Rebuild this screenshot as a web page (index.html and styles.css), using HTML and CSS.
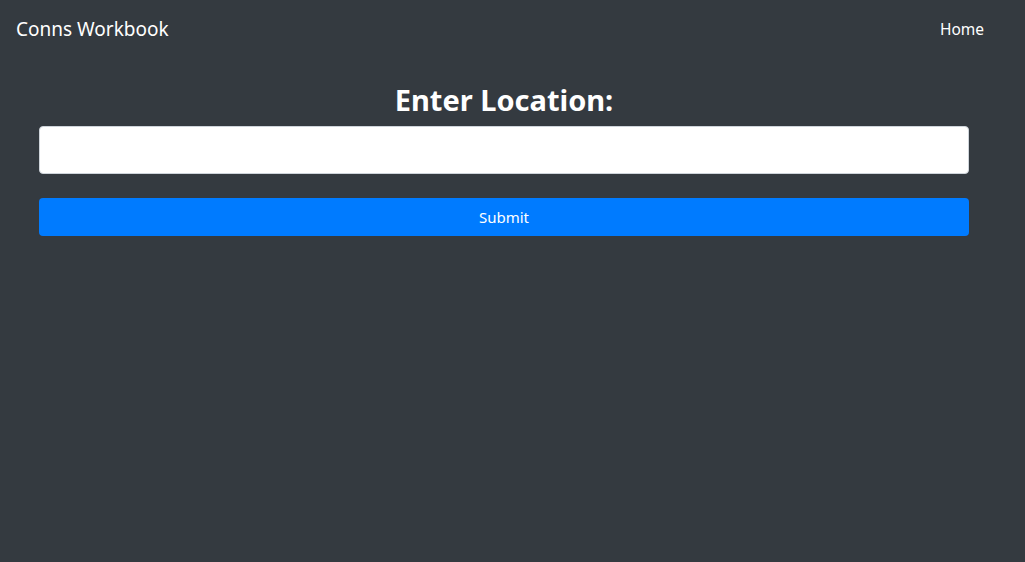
FILE: index.html
```html
<!DOCTYPE html>
<html lang="en">
<head>
<meta charset="utf-8">
<title>Conns Workbook</title>
<link rel="stylesheet" href="styles.css">
</head>
<body>
<div class="page">
  <nav class="navbar">
    <a class="brand" href="#">Conns Workbook</a>
    <a class="nav-link" href="#">Home</a>
  </nav>
  <main class="container">
    <h2 class="title">Enter Location:</h2>
    <form class="form">
      <input class="field" type="text" aria-label="Location">
      <button class="submit" type="button">Submit</button>
    </form>
  </main>
</div>
</body>
</html>
```

FILE: styles.css
```css
html, body {
  margin: 0;
  padding: 0;
  background: #343a40;
  height: 100%;
}
body {
  font-family: "Noto Sans", "Open Sans", sans-serif;
  color: #fff;
}
.page {
  width: 1008px;
}
.navbar {
  display: flex;
  align-items: center;
  justify-content: space-between;
  padding: 9px 16px 7px;
  height: 40px;
}
.brand {
  color: #fff;
  text-decoration: none;
  font-size: 19px;
  line-height: 30px;
}
.nav-link {
  color: #fff;
  text-decoration: none;
  font-size: 15.5px;
  padding: 8px;
}
.container {
  width: 930px;
  margin: 0 auto;
  padding-top: 25px;
}
.title {
  margin: 0 0 8px;
  text-align: center;
  font-size: 29px;
  font-weight: 700;
  line-height: 37px;
}
.form {
  display: flex;
  flex-direction: column;
  gap: 24px;
}
.field {
  box-sizing: border-box;
  height: 48px;
  width: 100%;
  border: 1px solid #ced4da;
  border-radius: 4px;
  background: #fff;
  font-size: 20px;
  padding: 8px 16px;
}
.submit {
  height: 38px;
  width: 100%;
  border: 0;
  border-radius: 4px;
  background: #007bff;
  color: #fff;
  font-family: inherit;
  font-size: 15px;
}
```
